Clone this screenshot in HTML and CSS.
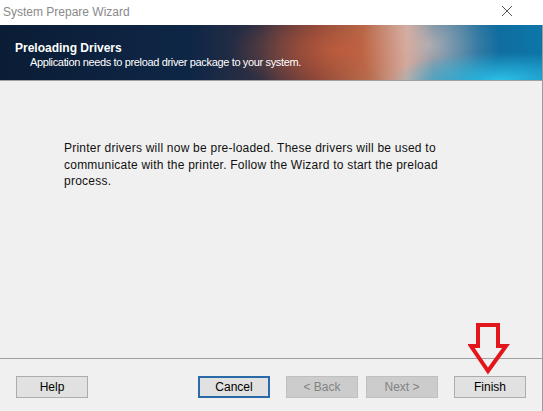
FILE: index.html
```
<!DOCTYPE html>
<html lang="en">
<head>
    <meta charset="UTF-8" />
    <title>System Prepare Wizard</title>
    <link rel="stylesheet" href="styles.css">
</head>
<body>
    <div class="window">
        <div class="titlebar">
            <span class="title">System Prepare Wizard</span>
            <svg class="close" width="12" height="12" viewBox="0 0 12 12">
                <path d="M1 1 L11 11 M11 1 L1 11" stroke="#555" stroke-width="1" fill="none"/>
            </svg>
        </div>

        <div class="frame">
            <!-- Banner with page title -->
            <div class="banner">
                <div class="banner-title">Preloading Drivers</div>
                <div class="banner-sub">Application needs to preload driver package to your system.</div>
            </div>

            <div class="content">
                <p class="message">
                    Printer drivers will now be pre-loaded. These drivers will be used to<br>
                    communicate with the printer. Follow the Wizard to start the preload<br>
                    process.
                </p>
            </div>

            <div class="footer">
                <button class="btn">Help</button>
                <div class="nav">
                    <button class="btn btn-default">Cancel</button>
                    <button class="btn btn-back" disabled>&lt; Back</button>
                    <button class="btn" disabled>Next &gt;</button>
                    <button class="btn btn-finish">Finish</button>
                </div>
            </div>

            <!-- Red marker pointing at Finish -->
            <svg class="marker" width="42" height="56" viewBox="0 0 42 56">
                <polygon points="10,3 30,3 30,24 38,24 20,49 3,24 10,24" fill="none" stroke="#e3161c" stroke-width="4" stroke-linejoin="miter"/>
            </svg>
        </div>
    </div>
</body>
</html>
```

FILE: styles.css
```
body {
    margin: 0;
    padding: 0;
    background: #ffffff;
    font-family: "Liberation Sans", Arial, sans-serif;
}
.window {
    width: 543px;
    height: 411px;
    display: flex;
    flex-direction: column;
}
.titlebar {
    height: 25px;
    display: flex;
    align-items: center;
    justify-content: space-between;
    padding: 0 30px 0 3px;
    background: #ffffff;
}
.title {
    font-size: 12px;
    color: #8a8a8a;
    margin-top: -2px;
}
.close {
    margin-top: -4px;
}
.frame {
    position: relative;
    flex: 1;
    display: flex;
    flex-direction: column;
    background: #f0f0f0;
    border-right: 1px solid #9c9c9c;
}
.banner {
    height: 55px;
    border-bottom: 1px solid #9fa3a8;
    box-sizing: content-box;
    color: #ffffff;
    padding-left: 15px;
    background:
        radial-gradient(ellipse 110px 28px at 500px 55px, rgba(45, 195, 235, 0.95), rgba(45, 195, 235, 0) 100%),
        radial-gradient(ellipse 70px 60px at 430px 20px, rgba(235, 215, 210, 0.55), rgba(235, 215, 210, 0) 100%),
        radial-gradient(ellipse 110px 45px at 340px 25px, rgba(200, 95, 60, 0.75), rgba(200, 95, 60, 0) 100%),
        linear-gradient(to right, #0b1d36 0%, #0e2646 35%, #2f2f42 48%, #7a3f36 58%, #b06a4c 67%, #c9a79c 75%, #4a7592 80%, #11689a 88%, #0d76a8 100%);
}
.banner-title {
    font-weight: bold;
    font-size: 12px;
    padding-top: 16px;
    line-height: 14px;
}
.banner-sub {
    font-size: 11px;
    padding-left: 15px;
    line-height: 15px;
    letter-spacing: -0.35px;
}
.content {
    flex: 1;
}
.message {
    margin: 59px 0 0 64px;
    font-size: 12px;
    line-height: 16.5px;
    letter-spacing: 0.23px;
    color: #111111;
}
.footer {
    height: 53px;
    border-top: 1px solid #a0a0a0;
    display: flex;
    justify-content: space-between;
    align-items: flex-start;
    padding: 17px 16px 0 16px;
    box-sizing: border-box;
}
.nav {
    display: flex;
    gap: 8px;
}
.btn {
    width: 72px;
    height: 22px;
    font-family: "Liberation Sans", Arial, sans-serif;
    font-size: 12px;
    color: #000000;
    background: #e1e1e1;
    border: 1px solid #adadad;
    padding: 0;
    margin: 0;
}
.btn-default {
    border: 2px solid #2a6aa8;
}
.btn:disabled {
    background: #cccccc;
    border-color: #bfbfbf;
    color: #838383;
}
.nav .btn-back,
.nav .btn-finish {
    margin-left: 8px;
}
.marker {
    position: absolute;
    left: 468px;
    top: 297px;
}
```
